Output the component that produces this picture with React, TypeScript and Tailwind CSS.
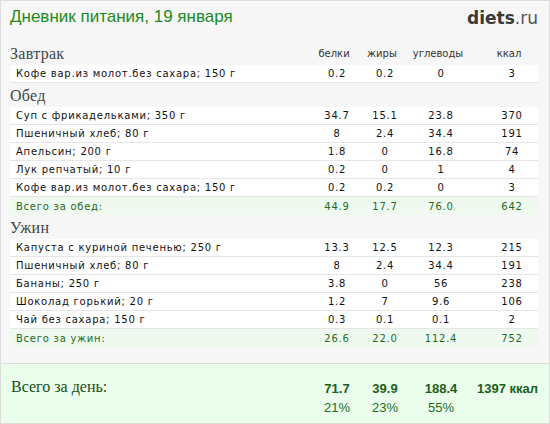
import React from "react";

type Row = { name: string; p: string; f: string; c: string; k: string };

const breakfast: Row[] = [
  { name: "Кофе вар.из молот.без сахара; 150 г", p: "0.2", f: "0.2", c: "0", k: "3" },
];
const lunch: Row[] = [
  { name: "Суп с фрикадельками; 350 г", p: "34.7", f: "15.1", c: "23.8", k: "370" },
  { name: "Пшеничный хлеб; 80 г", p: "8", f: "2.4", c: "34.4", k: "191" },
  { name: "Апельсин; 200 г", p: "1.8", f: "0", c: "16.8", k: "74" },
  { name: "Лук репчатый; 10 г", p: "0.2", f: "0", c: "1", k: "4" },
  { name: "Кофе вар.из молот.без сахара; 150 г", p: "0.2", f: "0.2", c: "0", k: "3" },
];
const dinner: Row[] = [
  { name: "Капуста с куриной печенью; 250 г", p: "13.3", f: "12.5", c: "12.3", k: "215" },
  { name: "Пшеничный хлеб; 80 г", p: "8", f: "2.4", c: "34.4", k: "191" },
  { name: "Бананы; 250 г", p: "3.8", f: "0", c: "56", k: "238" },
  { name: "Шоколад горький; 20 г", p: "1.2", f: "7", c: "9.6", k: "106" },
  { name: "Чай без сахара; 150 г", p: "0.3", f: "0.1", c: "0.1", k: "2" },
];

const serif = { fontFamily: '"Liberation Serif", "DejaVu Serif", serif' };
const sans = { fontFamily: '"DejaVu Sans", Verdana, sans-serif' };

function Cells({ r }: { r: Row }) {
  return (
    <>
      <div className="w-[48px] text-center">{r.p}</div>
      <div className="w-[48px] text-center">{r.f}</div>
      <div className="w-[64px] text-center">{r.c}</div>
      <div className="w-[52px] ml-[13px] text-center">{r.k}</div>
    </>
  );
}

function SectionHeader({ title, cols }: { title: string; cols?: boolean }) {
  return (
    <div className="flex items-end h-[24px] pb-[2px]">
      <div className="flex-1 text-[16px] leading-[18px] text-[#444] tracking-[0.3px]" style={serif}>
        {title}
      </div>
      {cols && (
        <div className="flex text-[10px] leading-[14px] text-[#333] pr-[3px] pb-[2px]" style={sans}>
          <div className="w-[48px] text-center">белки</div>
          <div className="w-[48px] text-center">жиры</div>
          <div className="w-[64px] text-center">углеводы</div>
          <div className="w-[52px] ml-[13px] text-center">ккал</div>
        </div>
      )}
    </div>
  );
}

function DataRow({ r }: { r: Row }) {
  return (
    <div
      className="flex items-center h-[18px] bg-white border-b border-[#e6e6e6] text-[10px] text-[#111] tracking-[0.75px]"
      style={sans}
    >
      <div className="flex-1 pl-[6px]">{r.name}</div>
      <Cells r={r} />
    </div>
  );
}

function TotalRow({ r }: { r: Row }) {
  return (
    <div
      className="flex items-center h-[18px] bg-[#f0f9f0] text-[10px] text-[#1c6b1c] tracking-[0.75px]"
      style={sans}
    >
      <div className="flex-1 pl-[6px]">{r.name}</div>
      <Cells r={r} />
    </div>
  );
}

export default function App() {
  return (
    <div className="w-[550px] h-[424px] border border-[#dcdcdc] bg-[#f7f7f7] flex flex-col overflow-hidden">
      <div className="flex justify-between items-start h-[40px] pl-[9px] pr-[11px] pt-[6px]">
        <div
          className="text-[17px] leading-[20px] text-[#1d8a1d]"
          style={{ fontFamily: '"Liberation Sans", Arial, sans-serif' }}
        >
          Дневник питания, 19 января
        </div>
        <div
          className="text-[17px] leading-[20px] text-[#3a3a3a] pt-[1px]"
          style={{ fontFamily: '"DejaVu Sans", sans-serif' }}
        >
          <span className="font-bold">diets</span>
          <span className="text-[#555]">.ru</span>
        </div>
      </div>

      <div className="pl-[9px] pr-[11px]">
        <SectionHeader title="Завтрак" cols />
        {breakfast.map((r, i) => (
          <DataRow key={i} r={r} />
        ))}
        <SectionHeader title="Обед" />
        {lunch.map((r, i) => (
          <DataRow key={i} r={r} />
        ))}
        <TotalRow r={{ name: "Всего за обед:", p: "44.9", f: "17.7", c: "76.0", k: "642" }} />
        <SectionHeader title="Ужин" />
        {dinner.map((r, i) => (
          <DataRow key={i} r={r} />
        ))}
        <TotalRow r={{ name: "Всего за ужин:", p: "26.6", f: "22.0", c: "112.4", k: "752" }} />
      </div>

      <div className="mt-[16px] flex-1 border-t border-[#dcdcdc] bg-[#ebfdeb] pl-[9px] pr-[11px] pt-[13px]">
        <div className="flex">
          <div className="flex-1 text-[16px] leading-[20px] text-[#184d18] pl-[1px]" style={serif}>
            Всего за день:
          </div>
          <div
            className="flex flex-col text-[13px] text-[#1f6b1f]"
            style={{ fontFamily: '"Liberation Sans", Arial, sans-serif' }}
          >
            <div className="flex font-bold leading-[20px] text-[#1b5e1b] pt-[2px]">
              <div className="w-[48px] text-center">71.7</div>
              <div className="w-[48px] text-center">39.9</div>
              <div className="w-[64px] text-center">188.4</div>
              <div className="w-[65px] text-right">1397 ккал</div>
            </div>
            <div className="flex leading-[18px]">
              <div className="w-[48px] text-center">21%</div>
              <div className="w-[48px] text-center">23%</div>
              <div className="w-[64px] text-center">55%</div>
              <div className="w-[65px]"></div>
            </div>
          </div>
        </div>
      </div>
    </div>
  );
}
